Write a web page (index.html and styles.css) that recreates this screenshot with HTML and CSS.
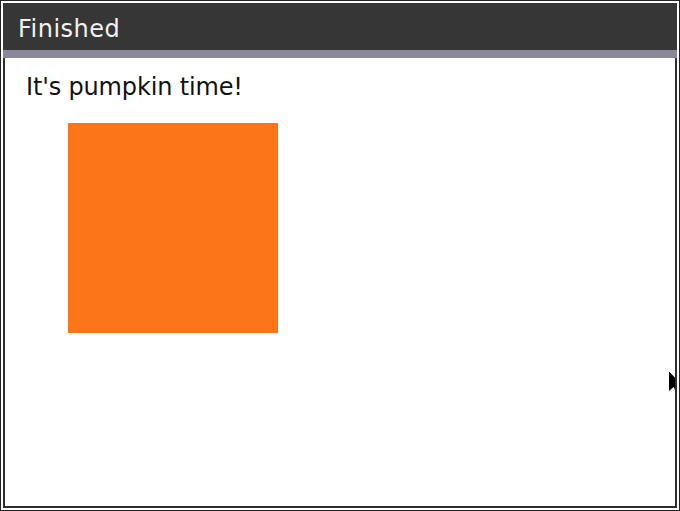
FILE: index.html
```html
<!DOCTYPE html>
<html>
<head>
<meta charset="utf-8">
<link rel="stylesheet" href="styles.css">
</head>
<body>
<div class="frame">
  <div class="header">Finished</div>
  <div class="bar"></div>
  <div class="content">
    <p class="message">It's pumpkin time!</p>
    <div class="pumpkin"></div>
    <svg class="cursor" width="18" height="28" viewBox="0 0 18 28">
      <path d="M0.5,0.5 L0.5,22 L5.5,17.5 L9,26.5 L12.5,25 L9,16.5 L16,16.5 Z" fill="#000" stroke="#fff" stroke-width="1"/>
    </svg>
  </div>
</div>
</body>
</html>
```
FILE: styles.css
```css
html, body {
  margin: 0;
  padding: 0;
  background: #fff;
}
.frame {
  width: 680px;
  height: 511px;
  box-sizing: border-box;
  border: 1px solid #222;
  padding: 2px;
  background: #fff;
  display: flex;
  flex-direction: column;
  font-family: "DejaVu Sans", sans-serif;
}
.header {
  height: 47px;
  box-sizing: border-box;
  padding: 6px 0 0 15px;
  line-height: 41px;
  font-size: 24px;
  letter-spacing: 0.5px;
  color: #f2f2f2;
  background: #363636;
}
.bar {
  height: 8px;
  background: #8a8799;
}
.content {
  flex: 1;
  position: relative;
  overflow: hidden;
  border: 2px solid #2e2e2e;
  border-top: none;
  padding: 15px 0 0 21px;
}
.message {
  margin: 0;
  font-size: 24px;
  line-height: 28px;
  color: #111;
  letter-spacing: -0.15px;
}
.pumpkin {
  width: 210px;
  height: 210px;
  margin: 22px 0 0 42px;
  background: #fd7519;
}
.cursor {
  position: absolute;
  left: 663px;
  top: 312px;
}
```
